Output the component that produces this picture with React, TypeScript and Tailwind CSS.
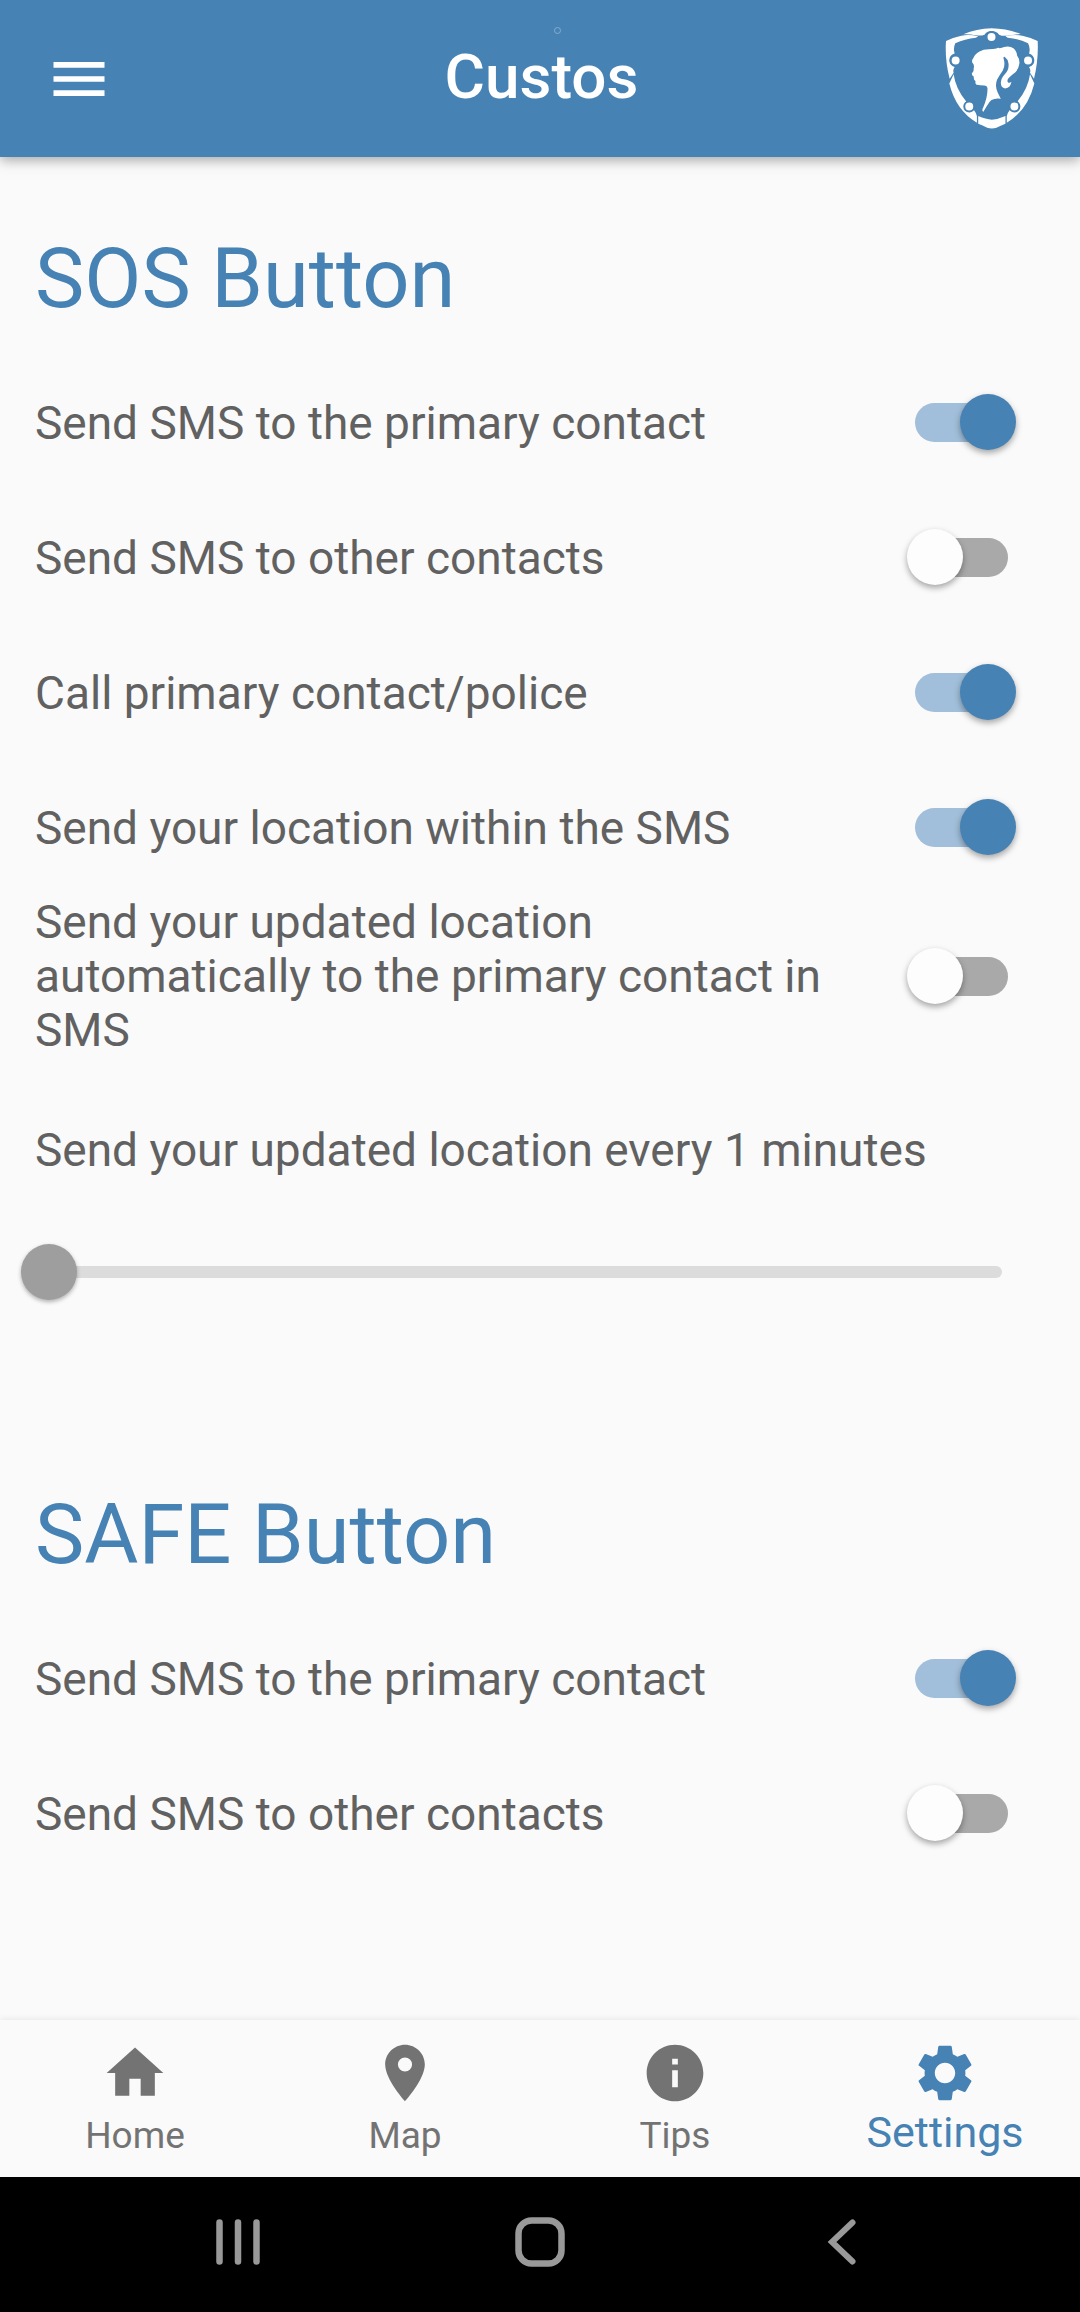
import { useState } from "react";
import type { ReactNode } from "react";
import { MdHome, MdInfo, MdMenu, MdPlace, MdSettings } from "react-icons/md";

const rivets = [
  [215, 82],
  [107, 153],
  [325, 153],
  [148, 291],
  [284, 291],
];

function ShieldLogo() {
  return (
    <svg viewBox="75 55 280 304" className="h-[101px] w-[93px]" role="img" aria-label="Custos logo">
      <g fill="#fff">
        <path d="M130 74Q170 57 215 56Q262 57 303 73Q280 75 262 78Q248 80 238 75Q230 64 215 64Q201 64 194 75Q184 79 168 77Q148 73 130 74Z" />
        <path d="M78 94Q100 83 124 78Q150 74 175 80L168 84Q135 87 106 101Q99 116 104 132Q88 137 88 153Q89 168 104 172Q98 181 101 190L89 208Q74 150 78 94Z" />
        <path d="M354 94Q332 83 308 78Q282 74 257 80L264 84Q297 87 325 101Q333 116 328 132Q343 137 344 153Q343 168 328 172Q334 181 331 190L343 208Q357 150 354 94Z" />
        <path d="M101 194Q107 238 139 276Q130 289 139 299Q148 308 162 302Q169 311 171 320L171 340Q108 303 88 222Z" />
        <path d="M331 194Q325 238 293 276Q302 289 293 299Q284 308 270 302Q263 311 261 320L261 340Q324 303 344 222Z" />
        <path d="M175 320Q198 330 216 331Q235 330 257 320L257 343Q240 350 230 355Q216 360 202 355Q188 347 175 343Z" />
        <path d="M157 159Q155 151 160 146Q166 132 179 126Q190 119 207 119Q221 119 230 117Q234 112 240 116Q246 114 253 112Q270 108 281 116Q291 124 292 138Q300 148 299 162Q297 178 287 188Q270 201 265 208Q261 215 265 219Q269 222 275 217Q273 235 256 237Q243 235 243 219Q244 205 255 194Q269 180 266 161Q264 148 255 142Q249 141 252 149Q257 169 249 183Q240 196 232 210Q224 229 234 250L243 268Q227 265 215 272Q207 278 201 290L190 308Q185 302 190 294Q203 265 203 238Q202 228 193 228Q181 228 170 226Q165 222 167 215Q160 210 162 202Q155 197 156 191Q163 185 161 177Q165 167 157 159Z" />
      </g>
      {rivets.map(([cx, cy]) => (
        <circle key={`${cx}-${cy}`} cx={cx} cy={cy} r="15" fill="#fff" stroke="#4682b4" strokeWidth="6" />
      ))}
    </svg>
  );
}

function SwitchRow({ label, checked, onChange }: { label: string; checked: boolean; onChange: (value: boolean) => void }) {
  return (
    <label className="flex min-h-[135px] items-center">
      <span className="flex-1 pr-6">{label}</span>
      <span className="flex w-[168px] shrink-0 justify-center">
        <input
          type="checkbox"
          role="switch"
          checked={checked}
          onChange={(event) => onChange(event.target.checked)}
          className="relative h-[39px] w-[93px] appearance-none rounded-full bg-[#a9a9a9] before:absolute before:-top-[9px] before:-left-2 before:size-14 before:rounded-full before:bg-[#fdfdfd] before:shadow-[0_3px_6px_rgba(0,0,0,0.35)] checked:bg-[#a1bfda] checked:before:left-[45px] checked:before:bg-[#4682b4]"
        />
      </span>
    </label>
  );
}

function SectionTitle({ children }: { children: ReactNode }) {
  return <h2 className="mb-[27px] text-[83px] leading-[98px] text-[#4682b4]">{children}</h2>;
}

function NavItem({ icon, label, active = false }: { icon: ReactNode; label: string; active?: boolean }) {
  return (
    <a
      href={"#" + label.toLowerCase()}
      aria-current={active ? "page" : undefined}
      className={
        active
          ? "flex flex-1 flex-col items-center pt-[19px] text-[43px] leading-[50px] text-[#4682b4]"
          : "flex flex-1 flex-col items-center pt-[19px] text-[37px] leading-[58px] text-[#737373]"
      }
    >
      {icon}
      {label}
    </a>
  );
}

export default function App() {
  const [primary, setPrimary] = useState(true);
  const [others, setOthers] = useState(false);
  const [call, setCall] = useState(true);
  const [location, setLocation] = useState(true);
  const [updates, setUpdates] = useState(false);
  const [minutes, setMinutes] = useState(1);
  const [safePrimary, setSafePrimary] = useState(true);
  const [safeOthers, setSafeOthers] = useState(false);

  return (
    <div className="flex min-h-screen flex-col bg-[#fafafa] font-[Roboto,sans-serif] text-[46px] leading-[54px] text-[#616161]">
      <header className="relative z-10 flex h-[157px] items-center justify-between bg-[#4682b4] pr-[42px] pl-[45px] text-white shadow-[0_3px_12px_rgba(0,0,0,0.35)]">
        <div className="flex flex-1">
          <button type="button" aria-label="Open menu">
            <MdMenu className="size-[68px]" />
          </button>
        </div>
        <h1 className="pb-1 text-[62px] leading-[72px] font-medium">Custos</h1>
        <div className="flex flex-1 justify-end">
          <ShieldLogo />
        </div>
        <span className="absolute top-[27px] left-[554px] size-[7px] rounded-full border border-[#86add0]" />
      </header>

      <main className="flex-1 px-[35px] pt-[73px] pb-[138px]">
        <section>
          <SectionTitle>SOS Button</SectionTitle>
          <SwitchRow label="Send SMS to the primary contact" checked={primary} onChange={setPrimary} />
          <SwitchRow label="Send SMS to other contacts" checked={others} onChange={setOthers} />
          <SwitchRow label="Call primary contact/police" checked={call} onChange={setCall} />
          <SwitchRow label="Send your location within the SMS" checked={location} onChange={setLocation} />
          <SwitchRow
            label="Send your updated location automatically to the primary contact in SMS"
            checked={updates}
            onChange={setUpdates}
          />
          <label htmlFor="interval" className="mt-[66px] block">
            Send your updated location every {minutes} minutes
          </label>
          <div className="mt-[27px] mr-[43px] -ml-[14px] flex h-[135px] items-center">
            <input
              id="interval"
              type="range"
              min={1}
              max={60}
              value={minutes}
              disabled={!updates}
              onChange={(event) => setMinutes(Number(event.target.value))}
              className="h-3 w-full appearance-none rounded-full bg-[#dcdcdc] [&::-webkit-slider-thumb]:size-14 [&::-webkit-slider-thumb]:appearance-none [&::-webkit-slider-thumb]:rounded-full [&::-webkit-slider-thumb]:bg-[#9e9e9e] [&::-webkit-slider-thumb]:shadow-[0_2px_4px_rgba(0,0,0,0.3)]"
            />
          </div>
        </section>

        <section className="mt-[147px]">
          <SectionTitle>SAFE Button</SectionTitle>
          <SwitchRow label="Send SMS to the primary contact" checked={safePrimary} onChange={setSafePrimary} />
          <SwitchRow label="Send SMS to other contacts" checked={safeOthers} onChange={setSafeOthers} />
        </section>
      </main>

      <nav className="flex h-[157px] bg-[#fafafa] shadow-[0_-1px_6px_rgba(0,0,0,0.08)]">
        <NavItem icon={<MdHome className="size-[68px]" />} label="Home" />
        <NavItem icon={<MdPlace className="size-[68px]" />} label="Map" />
        <NavItem icon={<MdInfo className="size-[68px]" />} label="Tips" />
        <NavItem icon={<MdSettings className="size-[68px]" />} label="Settings" active />
      </nav>

      <div className="grid h-[135px] grid-cols-3 place-items-center bg-black px-[87px] pb-[6px]">
        <button type="button" aria-label="Recent apps">
          <svg viewBox="0 0 52 52" className="size-[52px]" stroke="#999" strokeWidth="6.5" strokeLinecap="round">
            <path d="M7.5 6.5V45.5M26 6.5V45.5M44.5 6.5V45.5" />
          </svg>
        </button>
        <button type="button" aria-label="Home screen">
          <svg viewBox="0 0 52 52" className="size-[52px]" fill="none" stroke="#999" strokeWidth="6.5">
            <rect x="4.5" y="4.5" width="43" height="43" rx="13" />
          </svg>
        </button>
        <button type="button" aria-label="Back">
          <svg viewBox="0 0 52 52" className="size-[52px]" fill="none" stroke="#999" strokeWidth="6" strokeLinecap="round">
            <path d="M36.500 6.500L16 26L36.500 45.500" />
          </svg>
        </button>
      </div>
    </div>
  );
}
